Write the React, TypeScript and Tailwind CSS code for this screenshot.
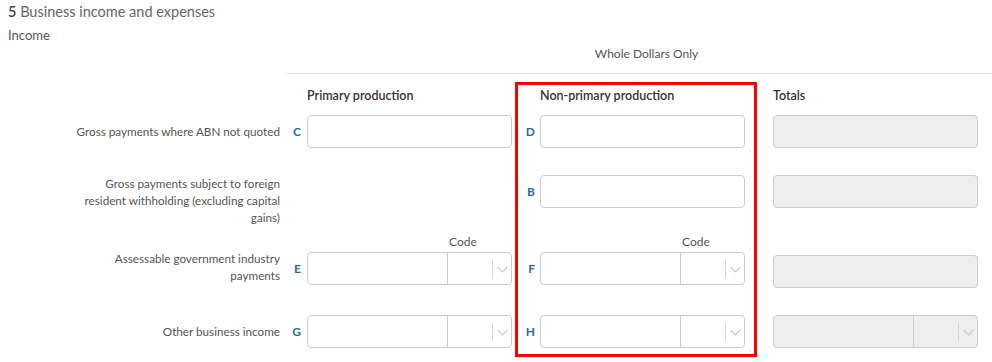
import React from "react";

const Chevron = () => (
  <svg width="11" height="7" viewBox="0 0 11 7" className="block">
    <polyline points="0.5,0.8 5.5,5.8 10.5,0.8" fill="none" stroke="#c8c8c8" strokeWidth="1.2" />
  </svg>
);

const TextInput = ({ disabled = false }: { disabled?: boolean }) => (
  <div
    className={`h-[33px] w-[205px] rounded-[4px] border border-[#cccccc] ${
      disabled ? "bg-[#eeeeee]" : "bg-white"
    }`}
  />
);

const SelectInput = ({ disabled = false }: { disabled?: boolean }) => (
  <div
    className={`flex h-[33px] w-[205px] rounded-[4px] border border-[#cccccc] ${
      disabled ? "bg-[#eeeeee]" : "bg-white"
    }`}
  >
    <div className="w-[140px] border-r border-[#cccccc]" />
    <div className="flex flex-1 items-center justify-end">
      <div className="h-[18px] w-px bg-[#d5d5d5]" />
      <div className="flex w-[18px] items-center justify-center pt-[1px]">
        <Chevron />
      </div>
    </div>
  </div>
);

const Letter = ({ ch, w }: { ch: string; w: string }) => (
  <div className={`${w} flex h-[33px] items-center justify-end text-[12px] font-bold text-[#2a6b9e]`}>{ch}</div>
);

const CodeLabel = () => (
  <div className="h-[17px] pl-[142px] text-[12px] leading-[14px] text-[#555]">Code</div>
);

export default function App() {
  return (
    <div className="h-[362px] w-[992px] overflow-hidden bg-white font-['Lato',sans-serif] text-[#555]">
      <div className="flex h-[24px] items-center pl-[8px] text-[14.5px] text-[#666]">
        <span className="font-semibold text-[#444]">5</span>&nbsp;Business income and expenses
      </div>
      <div className="flex h-[23px] items-center pl-[8px] text-[13px]">Income</div>
      <div className="ml-[287px] h-[27px] border-b border-[#dddddd] pl-[14px] text-center text-[12px] leading-[14px]">
        Whole Dollars Only
      </div>

      <div className="mt-[8px] flex">
        {/* Labels column */}
        <div className="w-[280px] pt-[33px] text-right text-[11.7px] leading-[17px] text-[#555]">
          <div className="h-[60px]">
            <div className="flex h-[33px] items-center justify-end">Gross payments where ABN not quoted</div>
          </div>
          <div className="h-[60px]">
            <div className="ml-auto w-[220px]">
              Gross payments subject to foreign
              <br />
              resident withholding (excluding capital
              <br />
              gains)
            </div>
          </div>
          <div className="h-[80px] pt-[15px]">
            <div className="ml-auto w-[220px]">
              Assessable government industry
              <br />
              payments
            </div>
          </div>
          <div className="h-[39px]">
            <div className="flex h-[33px] items-center justify-end">Other business income</div>
          </div>
        </div>

        {/* Primary production */}
        <div className="w-[232px] pt-[3px]">
          <div className="h-[30px] pl-[27px] text-[12.5px] font-semibold leading-[22px] text-[#333]">
            Primary production
          </div>
          <div className="flex h-[60px] items-start">
            <Letter ch="C" w="w-[27px] pr-[6px]" />
            <TextInput />
          </div>
          <div className="h-[60px]" />
          <div className="h-[80px]">
            <div className="pl-[27px]">
              <CodeLabel />
            </div>
            <div className="flex items-start">
              <Letter ch="E" w="w-[27px] pr-[6px]" />
              <SelectInput />
            </div>
          </div>
          <div className="flex h-[39px] items-start">
            <Letter ch="G" w="w-[27px] pr-[6px]" />
            <SelectInput />
          </div>
        </div>

        {/* Non-primary production (highlighted) */}
        <div className="ml-[3px] w-[242px] border-[3px] border-[#ff0000]">
          <div className="h-[30px] pl-[22px] text-[12.5px] font-semibold leading-[22px] text-[#333]">
            Non-primary production
          </div>
          <div className="flex h-[60px] items-start">
            <Letter ch="D" w="w-[22px] pr-[5px]" />
            <TextInput />
          </div>
          <div className="flex h-[60px] items-start">
            <Letter ch="B" w="w-[22px] pr-[5px]" />
            <TextInput />
          </div>
          <div className="h-[80px]">
            <div className="pl-[22px]">
              <CodeLabel />
            </div>
            <div className="flex items-start">
              <Letter ch="F" w="w-[22px] pr-[5px]" />
              <SelectInput />
            </div>
          </div>
          <div className="flex h-[39px] items-start">
            <Letter ch="H" w="w-[22px] pr-[5px]" />
            <SelectInput />
          </div>
        </div>

        {/* Totals */}
        <div className="ml-[16px] w-[205px] pt-[3px]">
          <div className="h-[30px] text-[12.5px] font-semibold leading-[22px] text-[#333]">Totals</div>
          <div className="h-[60px]">
            <TextInput disabled />
          </div>
          <div className="h-[60px]">
            <TextInput disabled />
          </div>
          <div className="h-[80px] pt-[20px]">
            <TextInput disabled />
          </div>
          <div className="h-[39px]">
            <SelectInput disabled />
          </div>
        </div>
      </div>
    </div>
  );
}
